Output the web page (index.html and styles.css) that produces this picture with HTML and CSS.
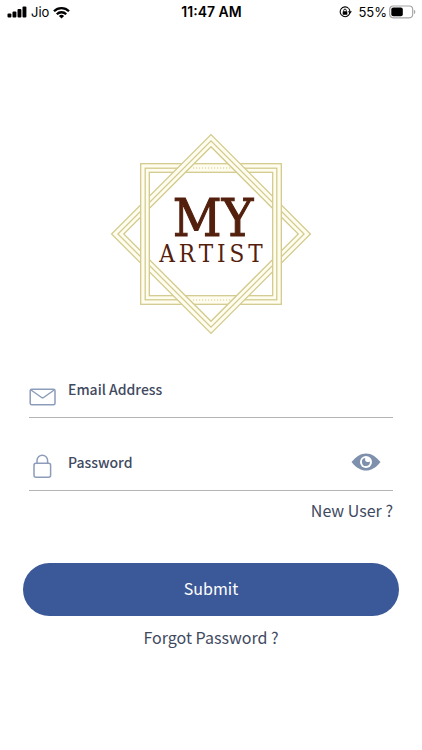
FILE: index.html
```html
<!DOCTYPE html>
<html lang="en">
<head>
<meta charset="utf-8">
<meta name="viewport" content="width=device-width, initial-scale=1">
<title>My Artist</title>
<link rel="stylesheet" href="styles.css">
</head>
<body>
<header class="status">
  <div class="status-side">
    <svg width="20" height="12" viewBox="0 0 20 12" aria-hidden="true">
      <rect x="0.500" y="7.500" width="3.900" height="4" rx="1"/>
      <rect x="5.500" y="5.500" width="3.900" height="6" rx="1"/>
      <rect x="10.500" y="3" width="3.900" height="8.500" rx="1"/>
      <rect x="15.500" y="0.500" width="3.900" height="11" rx="1"/>
    </svg>
    <span class="carrier">Jio</span>
    <svg width="17" height="13" viewBox="0 0 17 13" aria-hidden="true">
      <g fill="none" stroke="#000" stroke-width="2.300">
        <path d="M1 5.200a10.600 10.600 0 0 1 15 0"/>
        <path d="M3.800 8.200a6.600 6.600 0 0 1 9.400 0"/>
      </g>
      <path d="M8.500 12.600 5.900 10a3.700 3.700 0 0 1 5.200 0z"/>
    </svg>
  </div>
  <time class="clock">11:47 AM</time>
  <div class="status-side status-end">
    <svg width="13" height="12" viewBox="0 0 13 12" aria-hidden="true">
      <path d="M9.700 2.500A4.900 4.900 0 1 0 10.900 6.500" fill="none" stroke="#000" stroke-width="1.100"/>
      <path d="M9.700 2.500A4.900 4.900 0 0 1 10.900 5.500" fill="none" stroke="#000" stroke-width="1.100"/>
      <path d="M8.900 5.300h4l-2 2.600z"/>
      <rect x="3.700" y="5.200" width="4.600" height="3.500" rx="0.500"/>
      <path d="M4.700 5.500V4.400a1.300 1.300 0 0 1 2.600 0v1.100" fill="none" stroke="#000" stroke-width="0.900"/>
    </svg>
    <span class="charge">55%</span>
    <svg width="27" height="14" viewBox="0 0 27 14" aria-hidden="true">
      <rect x="0.700" y="1" width="23" height="11.800" rx="3.500" fill="none" stroke="#a5a5a5" stroke-width="1.200"/>
      <rect x="2.300" y="2.600" width="11.500" height="8.600" rx="2"/>
      <path d="M25 4.800a2.400 2.400 0 0 1 0 4.300z" fill="#a5a5a5"/>
    </svg>
  </div>
</header>

<main class="login">
  <svg class="logo" viewBox="-101 -101 202 202" role="img" aria-label="My Artist">
    <defs>
      <g id="frame" fill="none">
        <rect x="-66" y="-66" width="132" height="132" stroke="#fffdf0" stroke-width="9"/>
        <g stroke="#d3ca8e" stroke-width="1.300">
          <rect x="-70.300" y="-70.300" width="140.600" height="140.600"/>
          <rect x="-65.800" y="-65.800" width="131.600" height="131.600"/>
          <rect x="-61.700" y="-61.700" width="123.400" height="123.400"/>
        </g>
      </g>
      <clipPath id="sides">
        <rect x="-72" y="-50" width="12" height="100"/>
        <rect x="60" y="-50" width="12" height="100"/>
      </clipPath>
    </defs>
    <use href="#frame"/>
    <g fill="none">
      <path d="M-22-66h44M-22 66h44" stroke="#fffdf0" stroke-width="4"/>
      <path d="M-18-66h38M-18 66h38" stroke="#d3ca8e" stroke-width="1.200" stroke-dasharray="1.200 1.800"/>
    </g>
    <use href="#frame" transform="rotate(45)"/>
    <g clip-path="url(#sides)"><use href="#frame"/></g>
    <text class="logo-top" x="2" y="2" text-anchor="middle">MY</text>
    <text class="logo-bottom" x="2" y="28" text-anchor="middle">ARTIST</text>
  </svg>

  <form class="form">
    <div class="field">
      <label class="field-icon" for="email" aria-label="Email Address">
        <svg class="mail" width="28" height="20" viewBox="0 0 28 20" aria-hidden="true">
          <rect x="1.200" y="2.200" width="24.800" height="15.600" rx="1.500"/>
          <path d="M2 3l10.600 7.500q1 .7 2 0L25.200 3"/>
        </svg>
      </label>
      <input id="email" type="email" placeholder="Email Address">
    </div>
    <div class="field">
      <label class="field-icon" for="password" aria-label="Password">
        <svg class="lock" width="28" height="26" viewBox="0 0 28 26" aria-hidden="true">
          <rect x="5" y="10.200" width="16.600" height="14" rx="2"/>
          <path d="M8 10V7.500a5.300 5.300 0 0 1 10.600 0V10"/>
        </svg>
      </label>
      <input id="password" type="password" placeholder="Password">
      <button class="reveal" type="button" aria-label="Show password">
        <svg width="30" height="18" viewBox="0 0 30 18" aria-hidden="true">
          <path d="M.5 9C5 3.500 9.500.4 15 .4S25 3.500 29.500 9C25 14.500 20.500 17.600 15 17.600S5 14.500.5 9z" fill="#7f90ad"/>
          <circle cx="15" cy="9" r="6" fill="#fff"/>
          <path d="M14.200 5.100q-.6 3.600 1.800 3.900 1.500.2 2.900-.5A4 4 0 1 1 14.200 5.100z" fill="#7f90ad"/>
        </svg>
      </button>
    </div>
    <a class="link new-user" href="#register">New User ?</a>
    <button class="submit" type="submit">Submit</button>
    <a class="link forgot" href="#forgot">Forgot Password ?</a>
  </form>
</main>
</body>
</html>
```
FILE: styles.css
```css
* {
  box-sizing: border-box;
}

body {
  margin: 0;
  background: #fff;
  color: #3f4a5f;
  font-family: "Noto Sans CJK SC", "Noto Sans", sans-serif;
}

.status {
  display: grid;
  grid-template-columns: 1fr auto 1fr;
  align-items: center;
  height: 24px;
  padding: 0 6px 0 7px;
  color: #000;
  font-family: Inter, sans-serif;
  font-size: 13px;
}

.status-side {
  display: flex;
  align-items: center;
  gap: 4px;
}

.status-end {
  justify-content: flex-end;
}

.charge {
  margin: 0 -2px 0 2px;
}

.clock {
  font-size: 14px;
  font-weight: 600;
  line-height: 16px;
}

.login {
  display: flex;
  flex-direction: column;
  padding: 109px 23px 0;
}

.logo {
  align-self: center;
  width: 202px;
  height: 202px;
}

.logo text {
  fill: #53200d;
  stroke: #53200d;
  font-family: "DejaVu Serif Condensed", "DejaVu Serif", serif;
}

.logo .logo-top {
  font-size: 53px;
  stroke-width: 1px;
}

.logo .logo-bottom {
  font-size: 24px;
  letter-spacing: 4px;
  stroke-width: 0;
}

.form {
  display: flex;
  flex-direction: column;
  margin-top: 10px;
}

.field {
  display: flex;
  align-items: center;
  height: 73px;
  margin: 0 6px;
  padding-top: 16px;
  border-bottom: 1px solid #b4b4b6;
}

.field-icon {
  display: flex;
  width: 39px;
}

.field-icon svg {
  fill: none;
  stroke: #8d9cba;
  stroke-width: 1.5px;
}

.mail {
  margin-top: 16px;
}

.lock {
  margin-top: 8px;
}

.field input {
  flex: 1;
  min-width: 0;
  padding: 0;
  border: 0;
  outline: 0;
  background: none;
  color: #3f4a5f;
  font: 500 14px/24px "Noto Sans CJK SC", sans-serif;
}

.field input::placeholder {
  color: #3f4a5f;
  opacity: 1;
}

.reveal {
  display: flex;
  margin-right: 12px;
  padding: 0;
  border: 0;
  background: none;
}

.link {
  color: #3f4a5f;
  font-size: 16px;
  line-height: 24px;
  text-decoration: none;
}

.new-user {
  align-self: flex-end;
  margin: 7px 6px 0 0;
}

.submit {
  height: 53px;
  margin-top: 41px;
  padding-bottom: 4px;
  border: 0;
  border-radius: 27px;
  background: #3b5998;
  color: #fff;
  font: 400 16px/24px "Noto Sans CJK SC", sans-serif;
}

.forgot {
  align-self: center;
  margin-top: 9px;
}
```
